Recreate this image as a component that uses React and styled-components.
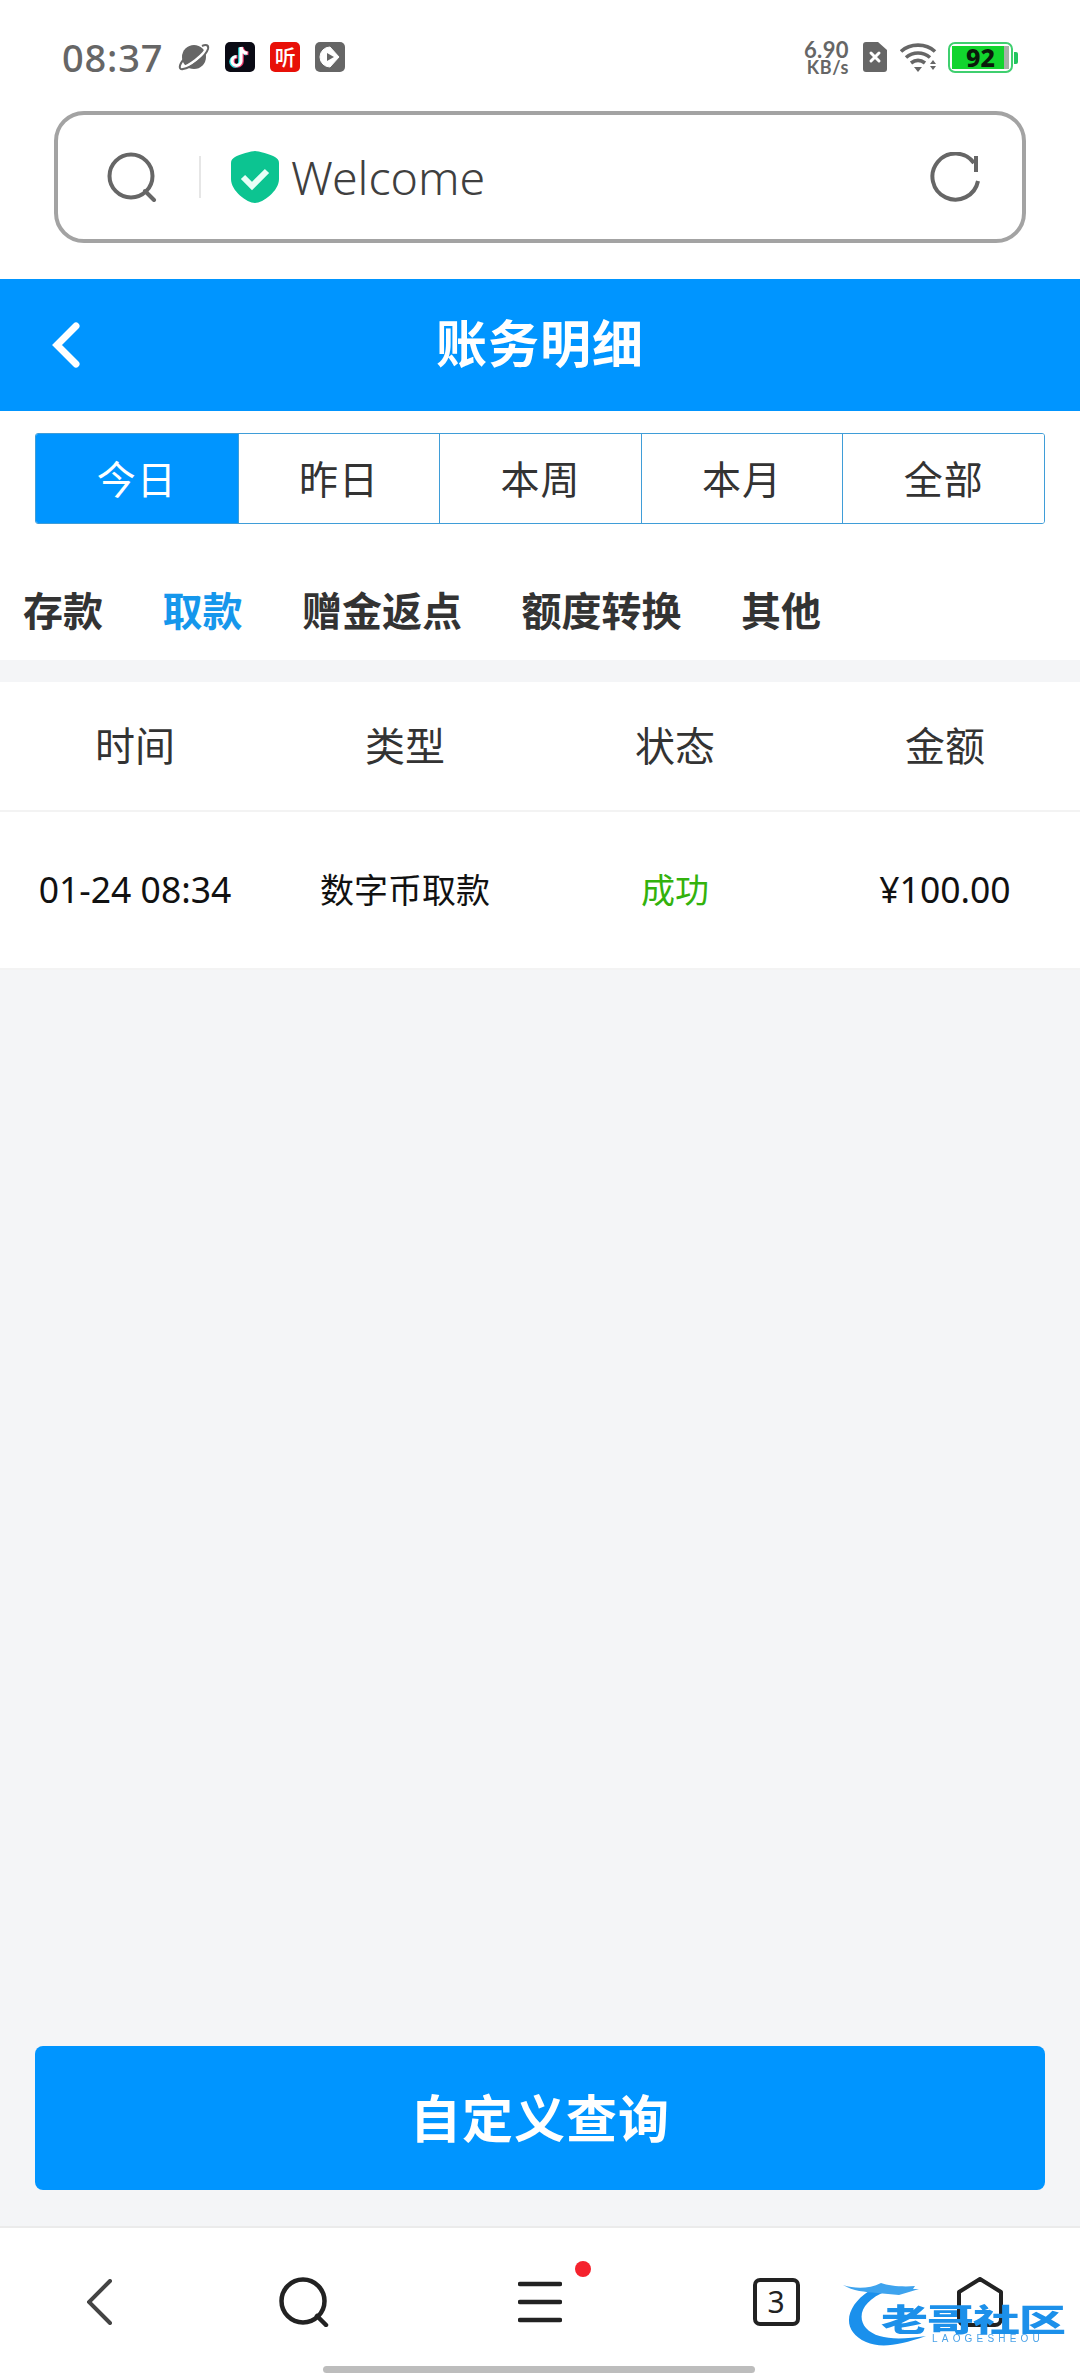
import React from "react";
import styled, { createGlobalStyle } from "styled-components";

const Global = createGlobalStyle`
  html, body { margin: 0; padding: 0; background: #fff; }
  * { box-sizing: border-box; }
  #root { width: 1080px; height: 2376px; overflow: hidden; }
`;

const FONT = `"Noto Sans", "Noto Sans CJK SC", sans-serif`;

const Page = styled.div`
  width: 1080px; height: 2376px; display: flex; flex-direction: column;
  background: #fff; font-family: ${FONT}; position: relative; overflow: hidden;
`;

const StatusBar = styled.div`
  height: 111px; padding: 3px 60px 0 62px; display: flex; align-items: center; flex-shrink: 0;
`;
const Time = styled.span`
  font-size: 38px; font-weight: 500; color: #666; letter-spacing: 0.8px; margin-right: 15px;
  font-family: "Noto Sans", sans-serif; line-height: 1;
`;
const AppIcons = styled.div`display: flex; gap: 15px; align-items: center;`;
const AppIcon = styled.div`
  width: 30px; height: 30px; border-radius: 5px; background: ${p => p.$bg};
  display: flex; align-items: center; justify-content: center; color: #fff;
`;
const TingText = styled.span`font-size: 21px; line-height: 1; font-weight: 500;`;
const Spacer = styled.div`flex: 1;`;
const SysIcons = styled.div`display: flex; align-items: center;`;
const Speed = styled.div`
  display: flex; flex-direction: column; align-items: flex-end; color: #666; line-height: 1;
  font-family: "Lato", sans-serif; font-weight: 700; margin-right: 14px;
`;
const SpeedNum = styled.span`font-size: 22px; line-height: 19px; letter-spacing: .4px;`;
const SpeedUnit = styled.span`font-size: 18px; line-height: 16px; letter-spacing: .6px;`;
const Battery = styled.div`
  width: 65px; height: 31px; border: 2px solid #3fcf6f; border-radius: 7px; padding: 2px;
  position: relative; margin-left: 10px; margin-right: 7px;
  &::after { content: ""; position: absolute; right: -7px; top: 8px; width: 4px; height: 12px; background: #22c55e; border-radius: 0 2px 2px 0; }
`;
const BatteryFill = styled.div`
  height: 100%; background: linear-gradient(to right, #12d42e 92%, #a8b0a8 92%);
  display: flex; align-items: center; justify-content: center;
  font-size: 25px; font-weight: 800; color: #0a1a0a; font-family: "Noto Sans", sans-serif; line-height: 1;
`;

const SearchBar = styled.div`
  margin: 0 54px 0 54px; height: 132px; flex-shrink: 0; border: 4px solid #a3a3a3; border-radius: 30px;
  display: flex; align-items: center; padding: 0 42px 0 49px;
`;
const Divider = styled.div`width: 2px; height: 42px; background: #e6e6e6; margin: 0 30px 0 42px;`;
const Welcome = styled.span`
  font-size: 46.5px; color: #3f3f3f; margin-left: 12px; font-weight: 300; line-height: 1;
  font-family: "Noto Sans", sans-serif;
`;

const Header = styled.header`
  margin-top: 36px; height: 132px; flex-shrink: 0; background: #0095ff; color: #fff;
  display: flex; align-items: center; justify-content: center; position: relative;
`;
const Back = styled.div`position: absolute; left: 50px; top: 41px; display: flex;`;
const Title = styled.h1`font-size: 51px; font-weight: 700; margin: 0 0 3px; letter-spacing: 1px; line-height: 1;`;

const Range = styled.div`
  margin: 22px 35px 0; height: 91px; flex-shrink: 0; display: grid; grid-template-columns: repeat(5, 1fr);
  border: 1px solid #3f9dd8; border-radius: 3px; overflow: hidden;
`;
const RangeItem = styled.div`
  display: flex; align-items: center; justify-content: center; font-size: 39px; letter-spacing: 1px; padding-bottom: 3px;
  background: ${p => p.$active ? "#0095ff" : "#fff"}; color: ${p => p.$active ? "#fff" : "#333"};
  border-left: ${p => p.$first ? "none" : "1.5px solid #3f9dd8"};
`;

const Cats = styled.div`
  height: 136px; flex-shrink: 0; display: flex; align-items: center; gap: 59.5px; padding: 38px 0 0 23px;
`;
const Cat = styled.div`
  font-size: 40px; font-weight: 700; color: ${p => p.$active ? "#1597ec" : "#333"}; line-height: 1;
`;

const Body = styled.main`
  flex: 1; background: #f4f5f7; display: flex; flex-direction: column; padding-top: 22px; min-height: 0;
`;
const Row = styled.div`
  height: ${p => p.$h}px; background: #fff; display: grid; grid-template-columns: repeat(4, 1fr);
  align-items: center; border-bottom: 2px solid #f3f3f3; flex-shrink: 0;
`;
const HeadCell = styled.div`text-align: center; font-size: 40px; color: #333; line-height: 1;`;
const Cell = styled.div`
  text-align: center; font-size: ${p => p.$size || 35.5}px; line-height: 1; color: ${p => p.$color || "#111"};
`;
const Grow = styled.div`flex: 1;`;
const Query = styled.button`
  margin: 0 35px 36px; height: 144px; border: none; border-radius: 8px; background: #0095ff; color: #fff;
  font-family: ${FONT}; font-size: 51px; font-weight: 700; flex-shrink: 0; letter-spacing: 1px; padding: 0 0 4px;
`;

const BottomNav = styled.nav`
  height: 150px; flex-shrink: 0; background: #fff; border-top: 2px solid #ebebeb; position: relative;
  display: grid; grid-template-columns: 200px 208px 264px 208px 200px; align-items: center; justify-items: center;
`;
const MenuWrap = styled.div`position: relative; display: flex;`;
const Dot = styled.span`
  position: absolute; left: 57px; top: -20px; width: 16px; height: 16px; border-radius: 50%; background: #f5222d;
`;
const Square = styled.div`
  width: 47px; height: 48px; border: 4px solid #222; border-radius: 7px; display: flex; align-items: center; justify-content: center;
  font-size: 30px; color: #222; line-height: 1; font-family: "Noto Sans", sans-serif;
`;
const Indicator = styled.div`
  position: absolute; left: 323px; bottom: 3px; width: 432px; height: 7px; background: #bdbdbd; border-radius: 4px;
`;

const Watermark = styled.div`
  position: absolute; left: 841px; bottom: 26px; width: 226px; height: 72px; color: #1a90ec; filter: blur(.7px);
`;
const MarkTitle = styled.div`
  position: absolute; left: 40px; top: 24px; font-size: 47px; font-weight: 900; line-height: 1; color: #1c90ea; white-space: nowrap;
  letter-spacing: -1px; transform: scaleY(.66); transform-origin: left top;
  font-family: "Noto Sans CJK SC", sans-serif;
`;
const MarkSub = styled.div`
  position: absolute; left: 91px; top: 56px; font-size: 10px; letter-spacing: 4.2px; font-family: "Liberation Sans", sans-serif;
  color: #4ba3e8; white-space: nowrap; line-height: 1;
`;

const Planet = () => (
  <svg width="32" height="30" viewBox="0 0 32 30">
    <circle cx="16" cy="15" r="12" fill="#666" />
    <path d="M3 25 C8 27 28 12 29 5" fill="none" stroke="#fff" strokeWidth="3" />
    <path d="M6 17 C0 24 1 28 5 27 C13 26 28 14 30 7 C31 3 28 2 24 4" fill="none" stroke="#666" strokeWidth="2" />
  </svg>
);
const Tiktok = () => (
  <svg width="24" height="26" viewBox="0 0 24 26">
    <path d="M13 3v14a4.5 4.5 0 1 1-4.5-4.5M13 3c.5 3.5 3 6 6.5 6.2" fill="none" stroke="#2de0e6" strokeWidth="3.6" transform="translate(-1 .6)" />
    <path d="M13 3v14a4.5 4.5 0 1 1-4.5-4.5M13 3c.5 3.5 3 6 6.5 6.2" fill="none" stroke="#f0386b" strokeWidth="3.6" transform="translate(1 .2)" />
    <path d="M13 3v14a4.5 4.5 0 1 1-4.5-4.5M13 3c.5 3.5 3 6 6.5 6.2" fill="none" stroke="#fff" strokeWidth="3.2" />
  </svg>
);
const Play = () => (
  <svg width="22" height="22" viewBox="0 0 22 22">
    <path d="M11 1a10 10 0 1 0 0 20l9-10L11 1z" fill="#fff" stroke="#fff" strokeLinejoin="round" />
    <path d="M8 7l7 4-7 4z" fill="#666" />
  </svg>
);
const Sim = () => (
  <svg width="24" height="30" viewBox="0 0 24 30">
    <path d="M3 0h12l9 8v19a3 3 0 0 1-3 3H3a3 3 0 0 1-3-3V3a3 3 0 0 1 3-3z" fill="#666" />
    <path d="M8 11l8 8M16 11l-8 8" stroke="#fff" strokeWidth="3" strokeLinecap="round" />
  </svg>
);
const Wifi = () => (
  <svg width="38" height="30" viewBox="0 0 38 30" style={{ marginLeft: 13 }}>
    <path d="M1 9.5C10 1 26 1 35 9.5" fill="none" stroke="#666" strokeWidth="3.6" />
    <path d="M6 15.5c7-6 17-6 24 0" fill="none" stroke="#666" strokeWidth="3.6" />
    <path d="M11 21c4.500-3.500 9.500-3.500 14 0" fill="none" stroke="#666" strokeWidth="3.6" />
    <path d="M14 25h8l-4 5z" fill="#666" />
    <path d="M33 18l-3 4h6zM30 24h6l-3 4z" fill="#666" />
  </svg>
);
const SearchIcon = ({ size, color, sw }) => (
  <svg width={size} height={size} viewBox="0 0 50 50" style={{ flexShrink: 0 }}>
    <circle cx="24" cy="24" r="21.500" fill="none" stroke={color} strokeWidth={sw} />
    <path d="M38 39l9 9" stroke={color} strokeWidth={sw} strokeLinecap="round" />
  </svg>
);
const Shield = () => (
  <svg width="48" height="52" viewBox="0 0 48 52" style={{ flexShrink: 0 }}>
    <path d="M24 0c3 0 16 3.500 20 6 2.500 1.500 4 3 4 6v16C48 40 32 52 24 52S0 40 0 28V12c0-3 1.500-4.500 4-6C8 3.500 21 0 24 0z" fill="#0cc491" />
    <path d="M12 26l9 9 15-15" fill="none" stroke="#e8fff7" strokeWidth="6" />
  </svg>
);
const Refresh = () => (
  <svg width="50" height="50" viewBox="0 0 50 50" style={{ flexShrink: 0 }}>
    <path d="M48 29A23 23 0 1 1 44 11" fill="none" stroke="#666" strokeWidth="4" />
    <path d="M46 4v16" stroke="#666" strokeWidth="4" />
  </svg>
);
const Chevron = () => (
  <svg width="34" height="50" viewBox="0 0 34 50">
    <path d="M26 6L7 25l19 19" fill="none" stroke="#fff" strokeWidth="7" strokeLinecap="round" />
  </svg>
);
const NavBack = () => (
  <svg width="26" height="46" viewBox="0 0 26 46">
    <path d="M23 2L2 23l21 21" fill="none" stroke="#444" strokeWidth="4" strokeLinecap="round" />
  </svg>
);
const Menu = () => (
  <svg width="44" height="42" viewBox="0 0 44 42">
    <path d="M2 3h40M2 21h40M2 39h40" stroke="#222" strokeWidth="4.500" strokeLinecap="round" />
  </svg>
);
const Home = () => (
  <svg width="46" height="50" viewBox="0 0 46 50">
    <path d="M2 15L23 2l21 13v27a6 6 0 0 1-6 6H8a6 6 0 0 1-6-6V15z" fill="none" stroke="#222" strokeWidth="4" strokeLinejoin="round" />
  </svg>
);
const Dragon = () => (
  <svg width="226" height="72" viewBox="0 0 226 72" style={{ position: "absolute", left: 0, top: 0 }}>
    <path d="M28 13C5 28 -1 52 25 64c14 6 32 4 60-6C58 62 36 62 25 50 15 38 22 22 46 13z" fill="#1a90ec" />
    <path d="M2 7c12 4 26 4 38-2 8 3 22 4 34 3l-2 3 6 0-20 6-22-2C24 14 12 13 2 7z" fill="#3ea3ee" />
  </svg>
);

const ranges = ["今日", "昨日", "本周", "本月", "全部"];
const cats = ["存款", "取款", "赠金返点", "额度转换", "其他"];
const heads = ["时间", "类型", "状态", "金额"];

export default function App() {
  return (
    <Page>
      <Global />
      <StatusBar>
        <Time>08:37</Time>
        <AppIcons>
          <Planet />
          <AppIcon $bg="#0a0a14"><Tiktok /></AppIcon>
          <AppIcon $bg="#e81008"><TingText>听</TingText></AppIcon>
          <AppIcon $bg="#666"><Play /></AppIcon>
        </AppIcons>
        <Spacer />
        <SysIcons>
          <Speed>
            <SpeedNum>6.90</SpeedNum>
            <SpeedUnit>KB/s</SpeedUnit>
          </Speed>
          <Sim />
          <Wifi />
          <Battery><BatteryFill>92</BatteryFill></Battery>
        </SysIcons>
      </StatusBar>

      <SearchBar>
        <SearchIcon size={50} color="#666" sw={4} />
        <Divider />
        <Shield />
        <Welcome>Welcome</Welcome>
        <Spacer />
        <Refresh />
      </SearchBar>

      <Header>
        <Back><Chevron /></Back>
        <Title>账务明细</Title>
      </Header>

      <Range>
        {ranges.map((r, i) => (
          <RangeItem key={r} $active={i === 0} $first={i === 0}>{r}</RangeItem>
        ))}
      </Range>

      <Cats>
        {cats.map((c, i) => <Cat key={c} $active={i === 1}>{c}</Cat>)}
      </Cats>

      <Body>
        <Row $h={130}>
          {heads.map(h => <HeadCell key={h}>{h}</HeadCell>)}
        </Row>
        <Row $h={158}>
          <Cell>01-24 08:34</Cell>
          <Cell $size={34}>数字币取款</Cell>
          <Cell $size={34} $color="#33b20d">成功</Cell>
          <Cell>¥100.00</Cell>
        </Row>
        <Grow />
        <Query>自定义查询</Query>
      </Body>

      <BottomNav>
        <Watermark>
          <Dragon />
          <MarkTitle>老哥社区</MarkTitle>
          <MarkSub>LAOGESHEOU</MarkSub>
        </Watermark>
        <NavBack />
        <SearchIcon size={50} color="#222" sw={4.500} />
        <MenuWrap><Menu /><Dot /></MenuWrap>
        <Square>3</Square>
        <Home />
        <Indicator />
      </BottomNav>
    </Page>
  );
}
